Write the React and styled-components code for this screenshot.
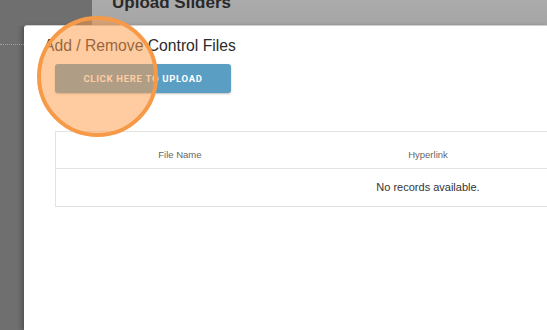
import React from "react";
import styled, { createGlobalStyle } from "styled-components";

const Global = createGlobalStyle`
  html, body { margin: 0; padding: 0; }
  body {
    width: 547px;
    height: 330px;
    overflow: hidden;
    background: #6e6e6e;
    font-family: "Liberation Sans", Arial, sans-serif;
  }
`;

const Page = styled.div`
  position: relative;
  width: 547px;
  height: 330px;
  display: flex;
  flex-direction: column;
  overflow: hidden;
`;

const TopBar = styled.div`
  display: flex;
  height: 26px;
  flex: none;
`;

const DarkCorner = styled.div`
  width: 92px;
  background: #6f6f6f;
`;

const Header = styled.div`
  flex: 1;
  background: linear-gradient(#ababab, #a5a5a5);
  padding-left: 20px;
  overflow: hidden;
`;

const HeaderTitle = styled.h1`
  margin: -7px 0 0;
  font-size: 17px;
  font-weight: 700;
  color: #2a2a2a;
  line-height: 20px;
`;

const Main = styled.div`
  display: flex;
  flex: 1;
  min-height: 0;
`;

const LeftStrip = styled.div`
  width: 24px;
  flex: none;
  background: linear-gradient(to right, #6f6f6f 70%, #646464);
  padding-top: 18px;
`;

const Dotted = styled.div`
  border-top: 1px dotted #a0a0a0;
`;

const Modal = styled.div`
  flex: 1;
  background: #ffffff;
  border-top-left-radius: 3px;
  box-shadow: 0 -1px 0 #cfcfcf, -1px 0 4px rgba(0, 0, 0, 0.25);
  padding: 10px 0 0 20px;
  display: flex;
  flex-direction: column;
  align-items: flex-start;
  min-width: 0;
`;

const Title = styled.h2`
  margin: 0;
  font-size: 15.7px;
  font-weight: 400;
  color: #2b2b2b;
  line-height: 19px;
`;

const UploadButton = styled.button`
  margin: 9px 0 0 11px;
  width: 176px;
  height: 29px;
  border: none;
  border-radius: 3px;
  background: #5a9ec4;
  color: #ffffff;
  font-family: Roboto, "Liberation Sans", Arial, sans-serif;
  font-weight: 700;
  font-size: 9.5px;
  letter-spacing: 0.7px;
  text-transform: uppercase;
  box-shadow: 0 1px 2px rgba(0, 0, 0, 0.25);
  cursor: pointer;
`;

const Table = styled.table`
  margin: 38px 0 0 11px;
  width: 746px;
  flex: none;
  border-collapse: collapse;
  border: 1px solid #e3e3e3;
  table-layout: fixed;
`;

const HeadCell = styled.th`
  height: 27px;
  padding: 9px 0 0;
  font-size: 9.5px;
  font-weight: 400;
  color: #666666;
  text-align: center;
  border-bottom: 1px solid #e3e3e3;
`;

const EmptyCell = styled.td`
  height: 35px;
  padding: 0 0 2px;
  font-size: 11px;
  color: #333333;
  text-align: center;
`;

const Highlight = styled.div`
  position: absolute;
  left: 37px;
  top: 16px;
  width: 121px;
  height: 121px;
  box-sizing: border-box;
  border-radius: 50%;
  border: 4px solid #f69a47;
  background: rgba(255, 158, 76, 0.52);
  pointer-events: none;
`;

export default function App() {
  return (
    <>
      <Global />
      <Page>
        <TopBar>
          <DarkCorner />
          <Header>
            <HeaderTitle>Upload Sliders</HeaderTitle>
          </Header>
        </TopBar>
        <Main>
          <LeftStrip>
            <Dotted />
          </LeftStrip>
          <Modal>
            <Title>Add / Remove Control Files</Title>
            <UploadButton>Click here to upload</UploadButton>
            <Table>
              <thead>
                <tr>
                  <HeadCell>File Name</HeadCell>
                  <HeadCell>Hyperlink</HeadCell>
                  <HeadCell />
                </tr>
              </thead>
              <tbody>
                <tr>
                  <EmptyCell colSpan={3}>No records available.</EmptyCell>
                </tr>
              </tbody>
            </Table>
          </Modal>
        </Main>
        <Highlight />
      </Page>
    </>
  );
}
